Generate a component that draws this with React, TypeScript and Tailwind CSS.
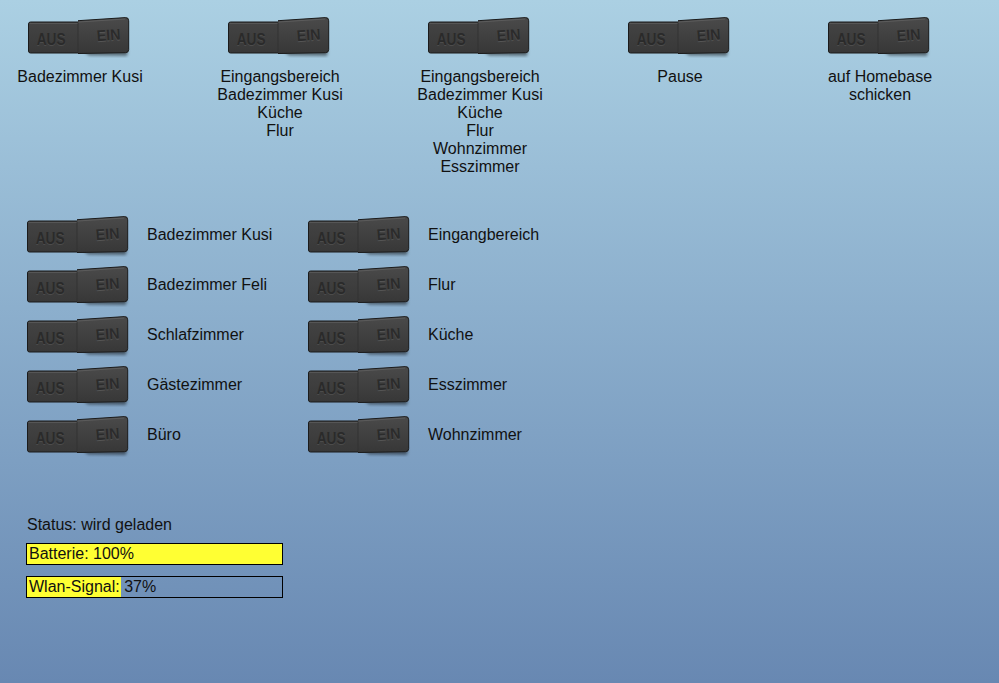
import React from "react";

const SCENES = [
  ["Badezimmer Kusi"],
  ["Eingangsbereich", "Badezimmer Kusi", "Küche", "Flur"],
  ["Eingangsbereich", "Badezimmer Kusi", "Küche", "Flur", "Wohnzimmer", "Esszimmer"],
  ["Pause"],
  ["auf Homebase", "schicken"],
];

const ROOMS_LEFT = ["Badezimmer Kusi", "Badezimmer Feli", "Schlafzimmer", "Gästezimmer", "Büro"];
const ROOMS_RIGHT = ["Eingangbereich", "Flur", "Küche", "Esszimmer", "Wohnzimmer"];

function Toggle() {
  return (
    <svg width="106" height="42" viewBox="0 0 106 42" className="block shrink-0">
      <defs>
        <linearGradient id="tgR" x1="0" y1="0" x2="0" y2="1">
          <stop offset="0" stopColor="#4a4a4a" />
          <stop offset="1" stopColor="#373737" />
        </linearGradient>
        <linearGradient id="tgL" x1="0" y1="0" x2="0" y2="1">
          <stop offset="0" stopColor="#434343" />
          <stop offset="1" stopColor="#383838" />
        </linearGradient>
        <filter id="tgS" x="-20%" y="-50%" width="140%" height="200%">
          <feGaussianBlur stdDeviation="1.6" />
        </filter>
      </defs>
      <path d="M56,35 L101,34 L100,40 L62,39.5 Z" fill="rgba(0,0,0,0.45)" filter="url(#tgS)" />
      <rect x="1.5" y="6" width="60" height="31" rx="2" fill="url(#tgL)" stroke="#1b1b1b" />
      <path
        d="M51,4.7 L98.5,1.6 Q101.7,1.4 101.7,4.8 L101.7,33.5 Q101.7,36.6 98.6,36.7 L51,37.5 Z"
        fill="url(#tgR)"
      />
      <path
        d="M51,4.7 L98.5,1.6 Q101.7,1.4 101.7,4.8 L101.7,33.5 Q101.7,36.6 98.6,36.7 L51,37.5"
        fill="none"
        stroke="#1b1b1b"
      />
      <line x1="51" y1="7" x2="51" y2="36" stroke="#333" strokeWidth="1" />
      <line x1="2.5" y1="7.5" x2="50.5" y2="7.5" stroke="#565656" strokeWidth="1" />
      <line x1="52" y1="6" x2="98" y2="3" stroke="#5c5c5c" strokeWidth="1" />
      <g fontFamily="'Liberation Sans', Arial, sans-serif" fontWeight="bold">
        <text x="9.7" y="29.7" fontSize="17" textLength="29" lengthAdjust="spacingAndGlyphs" fill="#4c4c4c">
          AUS
        </text>
        <text x="9.7" y="28.7" fontSize="17" textLength="29" lengthAdjust="spacingAndGlyphs" fill="#2a2a2a">
          AUS
        </text>
        <g transform="rotate(-4 81 19)">
          <text x="69.5" y="25.5" fontSize="15.5" textLength="24" lengthAdjust="spacingAndGlyphs" fill="#555">
            EIN
          </text>
          <text x="69.5" y="24.5" fontSize="15.5" textLength="24" lengthAdjust="spacingAndGlyphs" fill="#2b2b2b">
            EIN
          </text>
        </g>
      </g>
    </svg>
  );
}

function RoomRow({ label }: { label: string }) {
  return (
    <div className="flex h-[50px] items-start">
      <Toggle />
      <span className="ml-[15px] mt-[11px] leading-[18px]">{label}</span>
    </div>
  );
}

function Bar({ label, value }: { label: string; value: number }) {
  return (
    <div className="relative h-[22px] w-[257px] border border-black">
      <div className="absolute inset-y-0 left-0 bg-[#ffff33]" style={{ width: `${value}%` }} />
      <span className="relative block pl-[2px] leading-[19px]">{label}</span>
    </div>
  );
}

export default function App() {
  return (
    <div className="h-[683px] w-full overflow-hidden bg-gradient-to-b from-[#abd0e3] to-[#6888b2] font-['Liberation_Sans',Arial,sans-serif] text-[16px] text-[#111]">
      <div className="flex gap-[40px] pt-[16px]">
        {SCENES.map((lines, i) => (
          <div key={i} className="flex w-[160px] flex-col items-center">
            <Toggle />
            <div className="mt-[10px] text-center leading-[18px]">
              {lines.map((l) => (
                <div key={l}>{l}</div>
              ))}
            </div>
          </div>
        ))}
      </div>

      <div className="mt-[39px] flex pl-[26px]">
        <div className="w-[281px]">
          {ROOMS_LEFT.map((r) => (
            <RoomRow key={r} label={r} />
          ))}
        </div>
        <div className="w-[281px]">
          {ROOMS_RIGHT.map((r) => (
            <RoomRow key={r} label={r} />
          ))}
        </div>
      </div>

      <div className="mt-[51px] pl-[26px]">
        <div className="ml-[1px] leading-[18px]">Status: wird geladen</div>
        <div className="mt-[9px] flex flex-col gap-[11px]">
          <Bar label="Batterie: 100%" value={100} />
          <Bar label="Wlan-Signal: 37%" value={37} />
        </div>
      </div>
    </div>
  );
}
